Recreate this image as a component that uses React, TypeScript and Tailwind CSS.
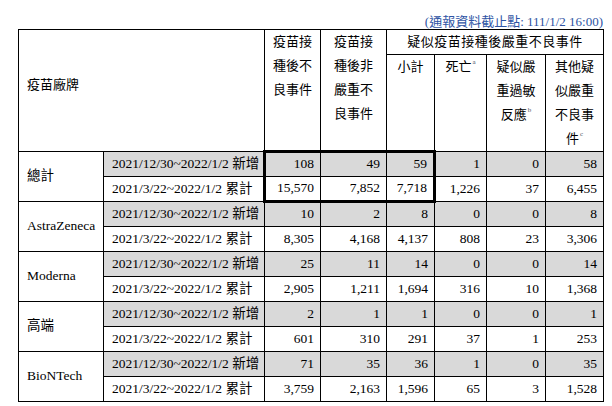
import React from 'react'

interface Row {
  brand: string
  rows: { label: string; values: string[] }[]
}

const NEW = '2021/12/30~2022/1/2 新增'
const SUM = '2021/3/22~2022/1/2 累計'

const data: Row[] = [
  { brand: '總計', rows: [
    { label: NEW, values: ['108', '49', '59', '1', '0', '58'] },
    { label: SUM, values: ['15,570', '7,852', '7,718', '1,226', '37', '6,455'] },
  ] },
  { brand: 'AstraZeneca', rows: [
    { label: NEW, values: ['10', '2', '8', '0', '0', '8'] },
    { label: SUM, values: ['8,305', '4,168', '4,137', '808', '23', '3,306'] },
  ] },
  { brand: 'Moderna', rows: [
    { label: NEW, values: ['25', '11', '14', '0', '0', '14'] },
    { label: SUM, values: ['2,905', '1,211', '1,694', '316', '10', '1,368'] },
  ] },
  { brand: '高端', rows: [
    { label: NEW, values: ['2', '1', '1', '0', '0', '1'] },
    { label: SUM, values: ['601', '310', '291', '37', '1', '253'] },
  ] },
  { brand: 'BioNTech', rows: [
    { label: NEW, values: ['71', '35', '36', '1', '0', '35'] },
    { label: SUM, values: ['3,759', '2,163', '1,596', '65', '3', '1,528'] },
  ] },
]

const font = { fontFamily: '"Liberation Serif", "Noto Sans CJK TC", serif' }

// thick box around the 總計 rows for the first three number columns
const boxClass = (g: number, r: number, c: number) => {
  if (g !== 0 || c > 2) return ''
  let cls = ''
  if (c === 0) cls += ' border-l-[3px]'
  if (c === 2) cls += ' border-r-[3px]'
  if (r === 0) cls += ' border-t-[3px]'
  if (r === 1) cls += ' border-b-[3px]'
  return cls
}

const Note = ({ children }: { children: string }) => (
  <span className="inline-block align-top text-[7px] leading-[14px] ml-[1px] text-gray-600">{children}</span>
)

export default function App() {
  return (
    <div className="w-[612px] h-[406px] bg-white text-black text-[13.5px]" style={font}>
      <div className="w-[603px] pl-[18px] pt-[15px]">
        <div className="h-[14px] leading-[14px] text-right text-[#2e54a4] text-[13px]">
          (通報資料截止點: 111/1/2 16:00)
        </div>
        <table className="border-collapse table-fixed w-[585px]">
          <colgroup>
            <col className="w-[85px]" />
            <col className="w-[161px]" />
            <col className="w-[56px]" />
            <col className="w-[66px]" />
            <col className="w-[48px]" />
            <col className="w-[52px]" />
            <col className="w-[59px]" />
            <col className="w-[58px]" />
          </colgroup>
          <thead>
            <tr className="h-[25px]">
              <th rowSpan={2} colSpan={2} className="border border-black text-left font-normal align-top pl-[8px] pt-[45px] text-[13px]">
                疫苗廠牌
              </th>
              <th rowSpan={2} className="border border-black font-normal align-top leading-[24px] text-[13px]">
                疫苗接<br />種後不<br />良事件
              </th>
              <th rowSpan={2} className="border border-black font-normal align-top leading-[24px] text-[13px]">
                疫苗接<br />種後非<br />嚴重不<br />良事件
              </th>
              <th colSpan={4} className="border border-black font-normal leading-[24px] text-[13px] tracking-[0.5px]">
                疑似疫苗接種後嚴重不良事件
              </th>
            </tr>
            <tr className="h-[97px]">
              <th className="border border-black font-normal align-top leading-[24px] text-[13px]">小計</th>
              <th className="border border-black font-normal align-top leading-[24px] text-[13px]">
                死亡<Note>a</Note>
              </th>
              <th className="border border-black font-normal align-top leading-[24px] text-[13px]">
                疑似嚴<br />重過敏<br />反應<Note>b</Note>
              </th>
              <th className="border border-black font-normal align-top leading-[24px] text-[13px]">
                其他疑<br />似嚴重<br />不良事<br />件<Note>c</Note>
              </th>
            </tr>
          </thead>
          <tbody>
            {data.map((group, g) =>
              group.rows.map((row, r) => {
                const gray = r === 0 ? 'bg-[#d9d9d9]' : ''
                return (
                  <tr key={`${g}-${r}`} className="h-[25px]">
                    {r === 0 && (
                      <td rowSpan={2} className="border border-black pl-[8px] align-middle">
                        {group.brand}
                      </td>
                    )}
                    <td className={`border border-black pl-[8px] whitespace-nowrap ${gray}`}>{row.label}</td>
                    {row.values.map((v, c) => (
                      <td key={c} className={`border border-black text-right pr-[6px] ${gray}${boxClass(g, r, c)}`}>
                        {v}
                      </td>
                    ))}
                  </tr>
                )
              })
            )}
          </tbody>
        </table>
      </div>
    </div>
  )
}
